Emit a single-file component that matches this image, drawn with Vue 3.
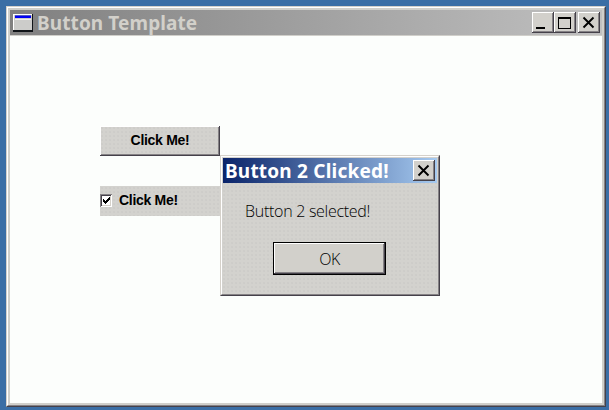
<script setup>
const windowTitle = 'Button Template'
const dialogTitle = 'Button 2 Clicked!'
</script>

<template>
  <div class="desktop">
    <div class="window">
      <div class="frame">
        <header class="titlebar">
          <svg class="app-icon" width="20" height="18" viewBox="0 0 20 18" shape-rendering="crispEdges">
            <rect width="20" height="18" fill="#101418" />
            <rect width="19" height="16" fill="#fff" />
            <rect x="1" y="1" width="18" height="15" fill="#ccccca" />
            <rect x="2" y="1" width="16" height="1" fill="#555bc9" />
            <rect x="2" y="2" width="16" height="2" fill="#0000f4" />
            <rect x="2" y="5" width="16" height="1" fill="#eee" />
          </svg>
          <h1 class="title">{{ windowTitle }}</h1>
          <div class="controls">
            <button class="ctl" aria-label="Minimize">
              <svg width="22" height="22" viewBox="0 0 22 22" shape-rendering="crispEdges"><path d="M4 15h9v2H4z" /></svg>
            </button>
            <button class="ctl" aria-label="Maximize">
              <svg width="22" height="22" viewBox="0 0 22 22" shape-rendering="crispEdges"><path fill-rule="evenodd" d="M4 5h13v12H4zM5 7v9h11V7z" /></svg>
            </button>
            <button class="ctl close" aria-label="Close">
              <svg width="22" height="22" viewBox="0 0 22 22"><path class="cross" d="M5.5 5.5l10 10M15.5 5.5l-10 10" /></svg>
            </button>
          </div>
        </header>
        <main class="client">
          <button class="push">Click Me!</button>
          <label class="check">
            <span class="box">
              <svg width="9" height="9" viewBox="0 0 9 9" shape-rendering="crispEdges"><path d="M1 3h1v1h1v1h1V4h1V3h1V2h1V1h1v3H7v1H6v1H5v1H4v1H3V7H2V6H1z" /></svg>
            </span>
            <span>Click Me!</span>
          </label>
        </main>
      </div>
    </div>

    <section class="dialog">
      <div class="dialog-inner">
        <header class="dialog-bar">
          <h2 class="dialog-title">{{ dialogTitle }}</h2>
          <button class="ctl" aria-label="Close dialog">
            <svg width="22" height="22" viewBox="0 0 22 22"><path class="cross" d="M5.5 5.5l10 10M15.5 5.5l-10 10" /></svg>
          </button>
        </header>
        <p class="message">Button 2 selected!</p>
        <button class="ok"><span>OK</span></button>
      </div>
    </section>
  </div>
</template>

<style>
body { margin: 0; overflow: hidden; }
</style>

<style scoped>
* { box-sizing: border-box; }
h1, h2, p { margin: 0; }
button { padding: 0; border: 0; border-radius: 0; color: #000; }

.desktop {
  position: relative;
  width: 609px;
  height: 410px;
  padding: 6px 3px 3px 6px;
  background: #3b6ea5;
}
.window {
  width: 600px;
  height: 401px;
  border: 1px solid;
  border-color: #d5d1ca #45414a #45414a #d5d1ca;
}
.frame {
  height: 100%;
  border: 1px solid;
  border-color: #fff #858285 #858285 #fff;
  padding: 2px;
  background: #d0cfca;
  display: flex;
  flex-direction: column;
}
.titlebar {
  height: 25px;
  margin-bottom: 1px;
  padding: 0 2px 0 3px;
  display: flex;
  align-items: center;
  background: linear-gradient(90deg, #808080, #c0c0c0);
}
.app-icon { flex: none; margin-right: 4px; }
.title, .dialog-title {
  flex: 1;
  padding-top: 2px;
  font: bold 19px/23px "Noto Sans", sans-serif;
  white-space: nowrap;
}
.title { color: #d2d0ca; letter-spacing: 0.1px; }
.controls { display: flex; }
.ctl {
  flex: none;
  width: 22px;
  height: 21px;
  background: #d2d0cb;
  box-shadow: inset -1px -1px #45414a, inset 1px 1px #fff, inset -2px -2px #858285;
}
.ctl svg { display: block; }
.cross { fill: none; stroke: #000; stroke-width: 1.9; }
.close { margin-left: 2px; }
.client {
  flex: 1;
  padding: 90px 0 0 90px;
  background: #fcfefc;
  display: flex;
  flex-direction: column;
  align-items: flex-start;
  gap: 30px;
}
.push, .check {
  width: 120px;
  height: 30px;
  background-color: #d3d2ce;
  background-image: radial-gradient(circle, #c9c9c5 0.5px, transparent 1px);
  background-size: 4px 4px;
  font: bold 14px/27px "Liberation Sans", sans-serif;
  letter-spacing: -0.3px;
  color: #000;
}
.push {
  padding-bottom: 2px;
  box-shadow: inset -1px -1px #45414a, inset 1px 1px #fff, inset -2px -2px #858285;
}
.check {
  display: flex;
  align-items: center;
  gap: 7px;
  padding-bottom: 2px;
}
.box {
  width: 12px;
  height: 13px;
  display: flex;
  padding: 2px;
  background: #fff;
  box-shadow: inset 1px 1px #858285, inset -1px -1px #fff, inset 2px 2px #45414a, inset -2px -2px #d5d1ca;
}
.box svg { flex: none; }

.dialog {
  position: absolute;
  left: 220px;
  top: 155px;
  width: 220px;
  height: 141px;
  border: 1px solid;
  border-color: #d5d1ca #45414a #45414a #d5d1ca;
}
.dialog-inner {
  height: 100%;
  padding: 1px;
  border: 1px solid;
  border-color: #fff #858285 #858285 #fff;
  background-color: #d3d2ce;
  background-image: radial-gradient(circle, #c9c9c5 0.5px, transparent 1px);
  background-size: 4px 4px;
  display: flex;
  flex-direction: column;
}
.dialog-bar {
  height: 25px;
  padding: 0 2px;
  display: flex;
  align-items: center;
  background: linear-gradient(90deg, #0a246a, #a6caf0);
}
.dialog-title { color: #fff; letter-spacing: 0.2px; }
.message {
  margin: 18px 0 0 22px;
  font: 300 16px/20px "Open Sans", "Noto Sans", sans-serif;
  letter-spacing: -0.28px;
  white-space: nowrap;
}
.ok {
  width: 113px;
  height: 33px;
  margin: 21px 0 0 50px;
  border: 1px solid #000;
  background: #d2d0cb;
  box-shadow: inset -1px -1px #45414a, inset 1px 1px #fff, inset -2px -2px #858285;
  font: 300 16px/30px "Open Sans", "Noto Sans", sans-serif;
  letter-spacing: -0.5px;
}
</style>
